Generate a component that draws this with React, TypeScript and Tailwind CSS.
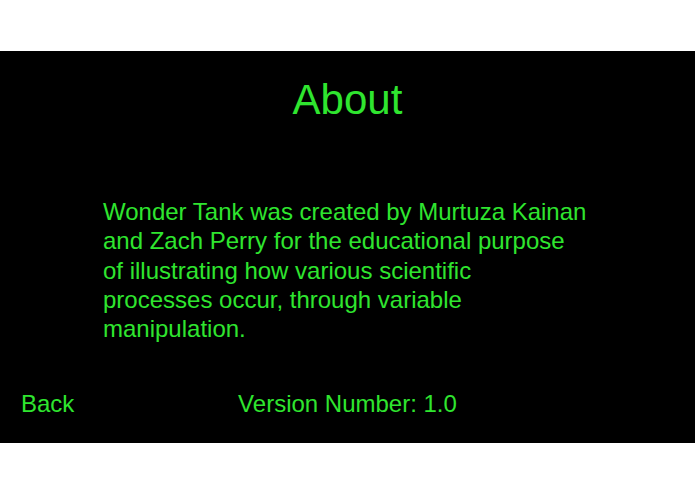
export default function App() {
  const lines = [
    'Wonder Tank was created by Murtuza Kainan',
    'and Zach Perry for the educational purpose',
    'of illustrating how various scientific',
    'processes occur, through variable',
    'manipulation.',
  ];

  return (
    <div
      className="min-h-screen w-full bg-white pt-[51px] pb-[51px]"
      style={{ fontFamily: '"Liberation Sans", Arial, Helvetica, sans-serif' }}
    >
      <div className="flex h-[392px] flex-col bg-black text-[#2fe52f]">
        <h1 className="pt-[28px] text-center text-[42px] leading-[42px]">About</h1>

        <p className="mt-[76px] pl-[103px] text-[24px] leading-[29.3px]">
          {lines.map((line) => (
            <span key={line} className="block whitespace-nowrap">
              {line}
            </span>
          ))}
        </p>

        <div className="mt-auto grid grid-cols-[1fr_auto_1fr] pb-[27px] text-[24px] leading-[24px]">
          <button className="justify-self-start pl-[21px] text-left">Back</button>
          <span>Version Number: 1.0</span>
          <span />
        </div>
      </div>
    </div>
  );
}
